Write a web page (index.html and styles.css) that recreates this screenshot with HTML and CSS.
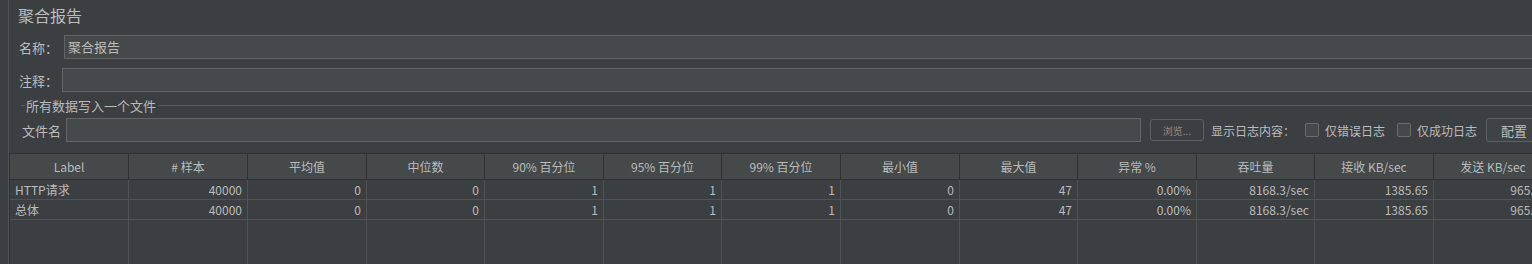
FILE: index.html
```html
<!DOCTYPE html>
<html>
<head>
  <meta charset="utf-8">
  <title>聚合报告</title>
  <link rel="stylesheet" href="styles.css">
</head>
<body>
  <div class="panel">
    <div class="title">聚合报告</div>

    <div class="field">
      <label class="lbl-name">名称：</label>
      <div class="input">聚合报告</div>
    </div>
    <div class="field">
      <label class="lbl-note">注释：</label>
      <div class="input"></div>
    </div>

    <div class="legend"><span>所有数据写入一个文件</span></div>
    <div class="file-row">
      <label class="lbl-file">文件名</label>
      <div class="input file-input"></div>
      <button class="btn-browse">浏览...</button>
      <span class="log-label">显示日志内容：</span>
      <span class="check"></span><span class="check-text">仅错误日志</span>
      <span class="check"></span><span class="check-text">仅成功日志</span>
      <button class="btn-config">配置</button>
    </div>

    <div class="table">
      <div class="row head">
        <div class="cell">Label</div>
        <div class="cell"># 样本</div>
        <div class="cell">平均值</div>
        <div class="cell">中位数</div>
        <div class="cell">90% 百分位</div>
        <div class="cell">95% 百分位</div>
        <div class="cell">99% 百分位</div>
        <div class="cell">最小值</div>
        <div class="cell">最大值</div>
        <div class="cell">异常 %</div>
        <div class="cell">吞吐量</div>
        <div class="cell">接收 KB/sec</div>
        <div class="cell">发送 KB/sec</div>
      </div>
      <div class="row body">
        <div class="cell first">HTTP请求</div>
        <div class="cell">40000</div>
        <div class="cell">0</div>
        <div class="cell">0</div>
        <div class="cell">1</div>
        <div class="cell">1</div>
        <div class="cell">1</div>
        <div class="cell">0</div>
        <div class="cell">47</div>
        <div class="cell">0.00%</div>
        <div class="cell">8168.3/sec</div>
        <div class="cell">1385.65</div>
        <div class="cell">965.03</div>
      </div>
      <div class="row body">
        <div class="cell first">总体</div>
        <div class="cell">40000</div>
        <div class="cell">0</div>
        <div class="cell">0</div>
        <div class="cell">1</div>
        <div class="cell">1</div>
        <div class="cell">1</div>
        <div class="cell">0</div>
        <div class="cell">47</div>
        <div class="cell">0.00%</div>
        <div class="cell">8168.3/sec</div>
        <div class="cell">1385.65</div>
        <div class="cell">965.03</div>
      </div>
      <div class="row filler">
        <div class="cell"></div><div class="cell"></div><div class="cell"></div>
        <div class="cell"></div><div class="cell"></div><div class="cell"></div>
        <div class="cell"></div><div class="cell"></div><div class="cell"></div>
        <div class="cell"></div><div class="cell"></div><div class="cell"></div>
        <div class="cell"></div>
      </div>
    </div>
  </div>
</body>
</html>
```

FILE: styles.css
```css
body{
  margin: 0;
  width: 1532px;
  height: 264px;
  overflow: hidden;
  background-color: #3c3f41;
  color: #bbbbbb;
  font-family: "Noto Sans CJK SC", "Noto Sans", sans-serif;
  font-size: 12px;
}
.panel{
  margin-left: 8px;
  border-left: 1px solid #505354;
  width: 1580px;
  height: 264px;
  overflow: hidden;
}
.title{
  height: 35px;
  line-height: 31px;
  padding-left: 9px;
  font-size: 16px;
}
.field{
  display: flex;
  align-items: center;
  height: 24px;
  padding-left: 10px;
  font-size: 13px;
}
.field + .field{
  margin-top: 9px;
}
.lbl-name{
  width: 45px;
}
.lbl-note{
  width: 43px;
}
.input{
  flex: 1;
  height: 24px;
  line-height: 22px;
  box-sizing: border-box;
  padding-left: 3px;
  background-color: #45494a;
  border: 1px solid #646464;
}
.legend{
  display: flex;
  align-items: center;
  height: 18px;
  margin-top: 4px;
  margin-left: 12px;
  font-size: 13px;
}
.legend::before{
  content: "";
  width: 4px;
  border-top: 1px solid #5b5e60;
  margin-right: 1px;
}
.legend::after{
  content: "";
  flex: 1;
  border-top: 1px solid #5b5e60;
  margin-left: 2px;
}
.file-row{
  display: flex;
  align-items: center;
  height: 24px;
  margin-top: 4px;
  padding-left: 13px;
}
.lbl-file{
  width: 44px;
  font-size: 13px;
}
.file-input{
  flex: none;
  width: 1075px;
}
button{
  font-family: inherit;
  background-color: #3c3f41;
  border: 1px solid #5e6060;
  border-radius: 3px;
  padding: 0;
  box-sizing: border-box;
}
.btn-browse{
  width: 54px;
  height: 22px;
  margin-left: 9px;
  font-size: 10px;
  color: #8c8c8c;
}
.log-label{
  margin-left: 7px;
}
.check{
  display: inline-block;
  width: 14px;
  height: 14px;
  box-sizing: border-box;
  margin-left: 10px;
  background-color: #43494a;
  border: 1px solid #6b6b6b;
  border-radius: 2px;
}
.check + .check-text + .check{
  margin-left: 12px;
}
.check-text{
  margin-left: 6px;
}
.btn-config{
  width: 56px;
  height: 24px;
  margin-left: 9px;
  font-size: 13px;
  color: #bbbbbb;
  background-color: #404345;
}
.table{
  margin-top: 11px;
  border-top: 1px solid #2f3133;
}
.row{
  display: grid;
  grid-template-columns: 119px 119px 119px 118px 119px 118px 119px 119px 118px 119px 118px 119px 119px;
  border-left: 1px solid #2f3133;
}
.cell{
  box-sizing: border-box;
  white-space: nowrap;
  overflow: hidden;
}
.head .cell{
  height: 26px;
  line-height: 25px;
  text-align: center;
  background-color: #45494a;
  border-right: 1px solid #2f3133;
  border-bottom: 1px solid #2f3133;
}
.body .cell{
  height: 20px;
  line-height: 19px;
  text-align: right;
  padding-right: 5px;
  border-right: 1px solid #505354;
  border-bottom: 1px solid #505354;
}
.body .first{
  text-align: left;
  padding-left: 5px;
}
.filler .cell{
  height: 60px;
  border-right: 1px solid #505354;
}
```
